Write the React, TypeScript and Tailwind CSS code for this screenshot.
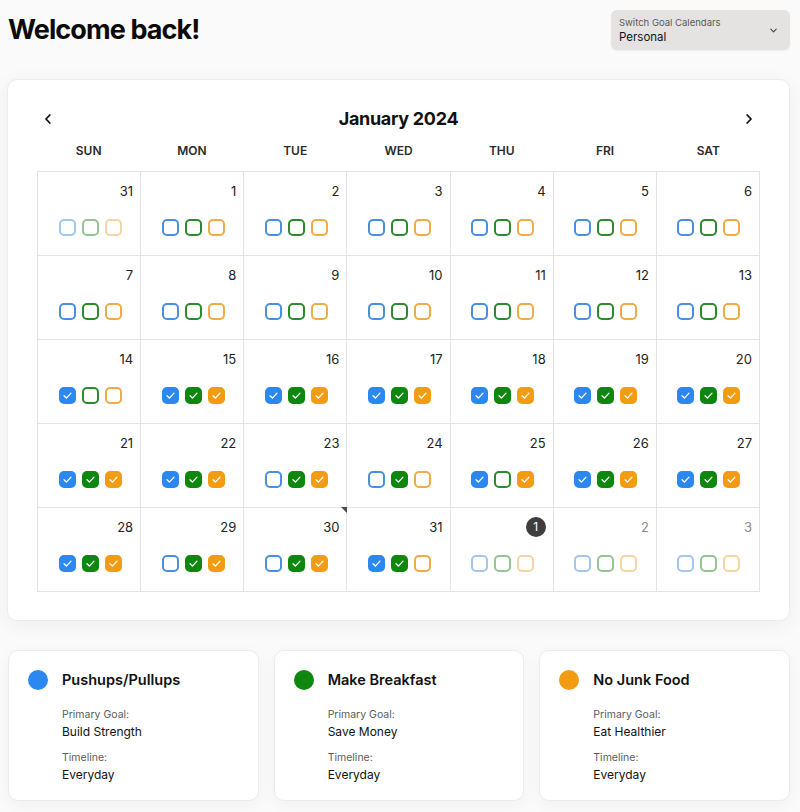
import React from 'react';

type Day = {
  date: number;
  inMonth: boolean;
  checks: [boolean, boolean, boolean];
  badge?: boolean;
  marker?: boolean;
};

const COLORS = ['#2b88f0', '#0d870d', '#f39c12'];
const BORDERS = ['border-[#4a8fdf]', 'border-[#2c8a2c]', 'border-[#efab45]'];
const FILLS = ['bg-[#2b88f0] border-[#2b88f0]', 'bg-[#0d870d] border-[#0d870d]', 'bg-[#f39c12] border-[#f39c12]'];

const N: [boolean, boolean, boolean] = [false, false, false];
const A: [boolean, boolean, boolean] = [true, true, true];

const days: Day[] = [
  { date: 31, inMonth: false, checks: N },
  ...[1, 2, 3, 4, 5, 6, 7, 8, 9, 10, 11, 12, 13].map((d) => ({ date: d, inMonth: true, checks: N })),
  { date: 14, inMonth: true, checks: [true, false, false] },
  ...[15, 16, 17, 18, 19, 20, 21, 22].map((d) => ({ date: d, inMonth: true, checks: A })),
  { date: 23, inMonth: true, checks: [false, true, true] },
  { date: 24, inMonth: true, checks: [false, true, false] },
  { date: 25, inMonth: true, checks: [true, false, true] },
  { date: 26, inMonth: true, checks: A },
  { date: 27, inMonth: true, checks: A },
  { date: 28, inMonth: true, checks: A },
  { date: 29, inMonth: true, checks: [false, true, true] },
  { date: 30, inMonth: true, checks: [false, true, true], marker: true },
  { date: 31, inMonth: true, checks: [true, true, false] },
  { date: 1, inMonth: false, checks: N, badge: true },
  { date: 2, inMonth: false, checks: N },
  { date: 3, inMonth: false, checks: N },
];

const goals = [
  { name: 'Pushups/Pullups', goal: 'Build Strength', color: COLORS[0] },
  { name: 'Make Breakfast', goal: 'Save Money', color: COLORS[1] },
  { name: 'No Junk Food', goal: 'Eat Healthier', color: COLORS[2] },
];

const Check = ({ i, on }: { i: number; on: boolean }) => (
  <span
    className={`flex h-[17px] w-[17px] items-center justify-center rounded-[5px] border-2 ${
      on ? FILLS[i] : `bg-white ${BORDERS[i]}`
    }`}
  >
    {on && (
      <svg width="11" height="11" viewBox="0 0 12 12" fill="none">
        <path d="M2.2 6.3 4.8 8.8 9.8 3.4" stroke="white" strokeWidth="1.4" strokeLinecap="round" strokeLinejoin="round" />
      </svg>
    )}
  </span>
);

const Chevron = ({ dir }: { dir: 'left' | 'right' }) => (
  <svg width="14" height="14" viewBox="0 0 14 14" fill="none">
    <path
      d={dir === 'left' ? 'M8.8 3 5 7l3.8 4' : 'M5.2 3 9 7l-3.8 4'}
      stroke="#111"
      strokeWidth="1.8"
      strokeLinecap="round"
      strokeLinejoin="round"
    />
  </svg>
);

export default function App() {
  return (
    <div className="min-h-[812px] bg-[#fafafa] pl-2 pr-[10px] pt-[10px] pb-3 text-[#111] font-['Inter','Liberation_Sans',sans-serif]">
      <div className="flex items-start justify-between">
        <h1 className="text-[27px] font-bold leading-[40px] tracking-[-0.9px] text-[#0b0b0b]">Welcome back!</h1>
        <button className="flex h-10 w-[179px] items-center justify-between rounded-md bg-[#e4e3e2] pl-2 pr-[12px] text-left shadow-[0_1px_2px_rgba(0,0,0,0.06)]">
          <div className="flex flex-col">
            <span className="text-[9.5px] leading-[13px] text-[#5a5a5a]">Switch Goal Calendars</span>
            <span className="text-[11.5px] leading-[16px] text-[#111]">Personal</span>
          </div>
          <svg width="9" height="9" viewBox="0 0 10 10" fill="none">
            <path d="M2 3.5 5 6.5l3-3" stroke="#444" strokeWidth="1.2" strokeLinecap="round" strokeLinejoin="round" />
          </svg>
        </button>
      </div>

      <div className="-ml-px mt-[29px] rounded-[10px] border border-[#ececec] bg-white px-[29px] pt-[28px] pb-[28px] shadow-[0_4px_20px_rgba(0,0,0,0.05)]">
        <div className="flex h-[22px] items-center justify-between px-[4px]">
          <Chevron dir="left" />
          <span className="text-[18px] font-bold leading-[22px] tracking-[-0.3px]">January 2024</span>
          <Chevron dir="right" />
        </div>
        <div className="mt-[12px] grid grid-cols-7">
          {['SUN', 'MON', 'TUE', 'WED', 'THU', 'FRI', 'SAT'].map((d) => (
            <div key={d} className="text-center text-[12px] font-semibold leading-[18px] text-[#2a2a2a]">
              {d}
            </div>
          ))}
        </div>
        <div className="mt-[11px] grid grid-cols-7 border-l border-t border-[#dfe4e6]">
          {days.map((d, idx) => (
            <div key={idx} className="relative h-[84px] border-b border-r border-[#dfe4e6] pt-[10px]">
              {d.marker && (
                <span className="absolute -top-px right-[-1px] h-0 w-0 border-l-[6px] border-t-[6px] border-l-transparent border-t-[#4a4a4a]" />
              )}
              <div className="flex h-[19px] justify-end pr-[7px]">
                {d.badge ? (
                  <span className="-mt-[1px] flex h-[20px] w-[20px] items-center justify-center rounded-full bg-[#3d3d3d] text-[12px] text-white">
                    {d.date}
                  </span>
                ) : (
                  <span className={`text-[13px] leading-[19px] ${d.inMonth || d.date === 31 ? 'text-[#222]' : 'text-[#8a8a8a]'}`}>
                    {d.date}
                  </span>
                )}
              </div>
              <div className={`mt-[18px] flex justify-center gap-[6px] pl-[2px] ${d.inMonth ? '' : 'opacity-50'}`}>
                {d.checks.map((c, i) => (
                  <Check key={i} i={i} on={c} />
                ))}
              </div>
            </div>
          ))}
        </div>
      </div>

      <div className="mt-[29px] grid grid-cols-3 gap-[15px]">
        {goals.map((g) => (
          <div key={g.name} className="h-[151px] rounded-[10px] border border-[#ececec] bg-white pl-[19px] pt-[19px] shadow-[0_4px_16px_rgba(0,0,0,0.04)]">
            <div className="flex items-center gap-[14px]">
              <span className="h-[20px] w-[20px] rounded-full" style={{ backgroundColor: g.color }} />
              <span className="text-[14.5px] font-semibold leading-[20px] text-[#111]">{g.name}</span>
            </div>
            <div className="ml-[34px] mt-[18px] flex flex-col">
              <span className="text-[10.5px] leading-[14px] text-[#5c5c5c]">Primary Goal:</span>
              <span className="mt-[2px] text-[12px] leading-[16px] text-[#111]">{g.goal}</span>
              <span className="mt-[11px] text-[10.5px] leading-[14px] text-[#5c5c5c]">Timeline:</span>
              <span className="mt-[2px] text-[12px] leading-[16px] text-[#111]">Everyday</span>
            </div>
          </div>
        ))}
      </div>
    </div>
  );
}
